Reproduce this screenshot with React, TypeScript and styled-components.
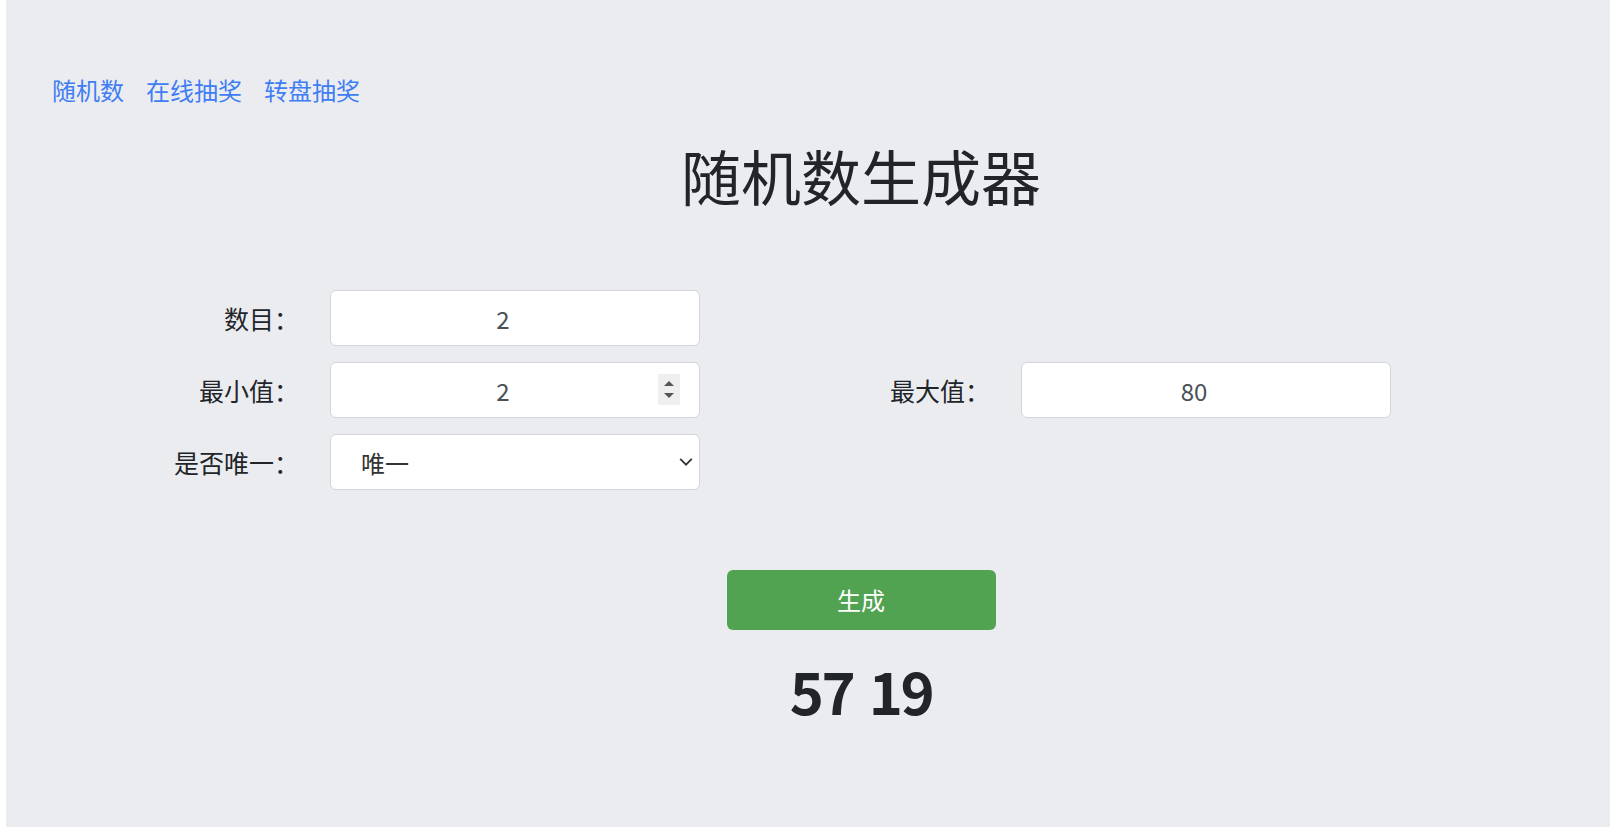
import React, { useState } from "react";
import styled, { createGlobalStyle } from "styled-components";

const GlobalStyle = createGlobalStyle`
  html, body {
    margin: 0;
    padding: 0;
    background: #ffffff;
  }
  body {
    font-family: "Noto Sans CJK SC", "Noto Sans", sans-serif;
    color: #212529;
  }
  * {
    box-sizing: border-box;
  }
`;

function pickNumbers(count: number, min: number, max: number, unique: boolean) {
  const out: number[] = [];
  const span = max - min + 1;
  let guard = 0;
  while (out.length < count && guard < 10000) {
    guard++;
    const n = min + Math.floor(Math.random() * span);
    if (unique && out.includes(n)) continue;
    out.push(n);
  }
  return out;
}

function App() {
  const [count, setCount] = useState("2");
  const [min, setMin] = useState("2");
  const [max, setMax] = useState("80");
  const [unique, setUnique] = useState("1");
  const [result, setResult] = useState("57 19");

  const onGenerate = () => {
    const nums = pickNumbers(
      Number(count) || 1,
      Number(min) || 0,
      Number(max) || 0,
      unique === "1",
    );
    setResult(nums.join(" "));
  };

  return (
    <>
      <GlobalStyle />
      <Page>
        <Nav>
          <NavLink href="#">随机数</NavLink>
          <NavLink href="#">在线抽奖</NavLink>
          <NavLink href="#">转盘抽奖</NavLink>
        </Nav>

        <Centered>
          <Title>随机数生成器</Title>
        </Centered>

        <FormGrid>
          <Label>数目：</Label>
          <NumberInput value={count} onChange={(e) => setCount(e.target.value)} />
          <span />
          <span />

          <Label>最小值：</Label>
          <Field>
            <NumberInput value={min} onChange={(e) => setMin(e.target.value)} />
            <Spinner>
              <ArrowUp />
              <ArrowDown />
            </Spinner>
          </Field>
          <Label>最大值：</Label>
          <NumberInput value={max} onChange={(e) => setMax(e.target.value)} />

          <Label>是否唯一：</Label>
          <Field>
            <Select value={unique} onChange={(e) => setUnique(e.target.value)}>
              <option value="1">唯一</option>
              <option value="0">可重复</option>
            </Select>
            <Chevron width="14" height="9" viewBox="0 0 14 9">
              <polyline
                points="1.2,1.4 7,7.2 12.8,1.4"
                fill="none"
                stroke="#333"
                strokeWidth="1.8"
              />
            </Chevron>
          </Field>
        </FormGrid>

        <Centered>
          <GenerateButton onClick={onGenerate}>生成</GenerateButton>
          <Result>{result}</Result>
        </Centered>
      </Page>
    </>
  );
}

export default App;

const Page = styled.div`
  margin-left: 6px;
  min-height: calc(100vh - 2px);
  background: #ebecf0;
  padding-top: 72px;
  padding-bottom: 40px;
`;

const Nav = styled.nav`
  display: flex;
  gap: 22px;
  padding-left: 46px;
`;

const NavLink = styled.a`
  font-size: 24px;
  line-height: 36px;
  color: #3f7df5;
  text-decoration: none;
`;

const Centered = styled.div`
  display: flex;
  flex-direction: column;
  align-items: center;
  padding-left: 106px;
`;

const Title = styled.h1`
  margin: 31px 0 0;
  font-size: 60px;
  line-height: 72px;
  font-weight: 400;
  color: #212529;
`;

const FormGrid = styled.div`
  display: grid;
  grid-template-columns: 232px 370px 321px 370px;
  grid-auto-rows: 56px;
  row-gap: 16px;
  margin: 79px 0 0 92px;
  align-items: center;
`;

const Label = styled.label`
  text-align: right;
  padding-right: 31px;
  font-size: 25px;
  line-height: 36px;
  color: #212529;
`;

const Field = styled.div`
  position: relative;
  height: 56px;
`;

const NumberInput = styled.input.attrs({ inputMode: "numeric" })`
  width: 370px;
  height: 56px;
  border: 1px solid #d2d5da;
  border-radius: 6px;
  background: #ffffff;
  padding: 0 42px 0 18px;
  font-family: inherit;
  font-size: 24px;
  color: #495057;
  text-align: center;
  outline: none;
`;

const Spinner = styled.div`
  position: absolute;
  top: 12px;
  right: 20px;
  width: 22px;
  height: 31px;
  background: #efefef;
  display: flex;
  flex-direction: column;
  align-items: center;
  justify-content: space-evenly;
`;

const ArrowUp = styled.span`
  width: 0;
  height: 0;
  border-left: 5px solid transparent;
  border-right: 5px solid transparent;
  border-bottom: 5px solid #555555;
`;

const ArrowDown = styled.span`
  width: 0;
  height: 0;
  border-left: 5px solid transparent;
  border-right: 5px solid transparent;
  border-top: 5px solid #555555;
`;

const Select = styled.select`
  appearance: none;
  width: 370px;
  height: 56px;
  border: 1px solid #d2d5da;
  border-radius: 6px;
  background: #ffffff;
  padding: 0 40px 0 30px;
  font-family: inherit;
  font-size: 24px;
  color: #333333;
  outline: none;
`;

const Chevron = styled.svg`
  position: absolute;
  right: 7px;
  top: 50%;
  transform: translateY(-50%);
  pointer-events: none;
`;

const GenerateButton = styled.button`
  margin-top: 80px;
  width: 269px;
  height: 60px;
  border: none;
  border-radius: 6px;
  background: #51a351;
  color: #ffffff;
  font-family: inherit;
  font-size: 24px;
  line-height: 1;
  cursor: pointer;
`;

const Result = styled.div`
  margin-top: 24px;
  font-size: 58px;
  line-height: 72px;
  font-weight: 600;
  letter-spacing: -2.5px;
  word-spacing: 5px;
  color: #212529;
`;
